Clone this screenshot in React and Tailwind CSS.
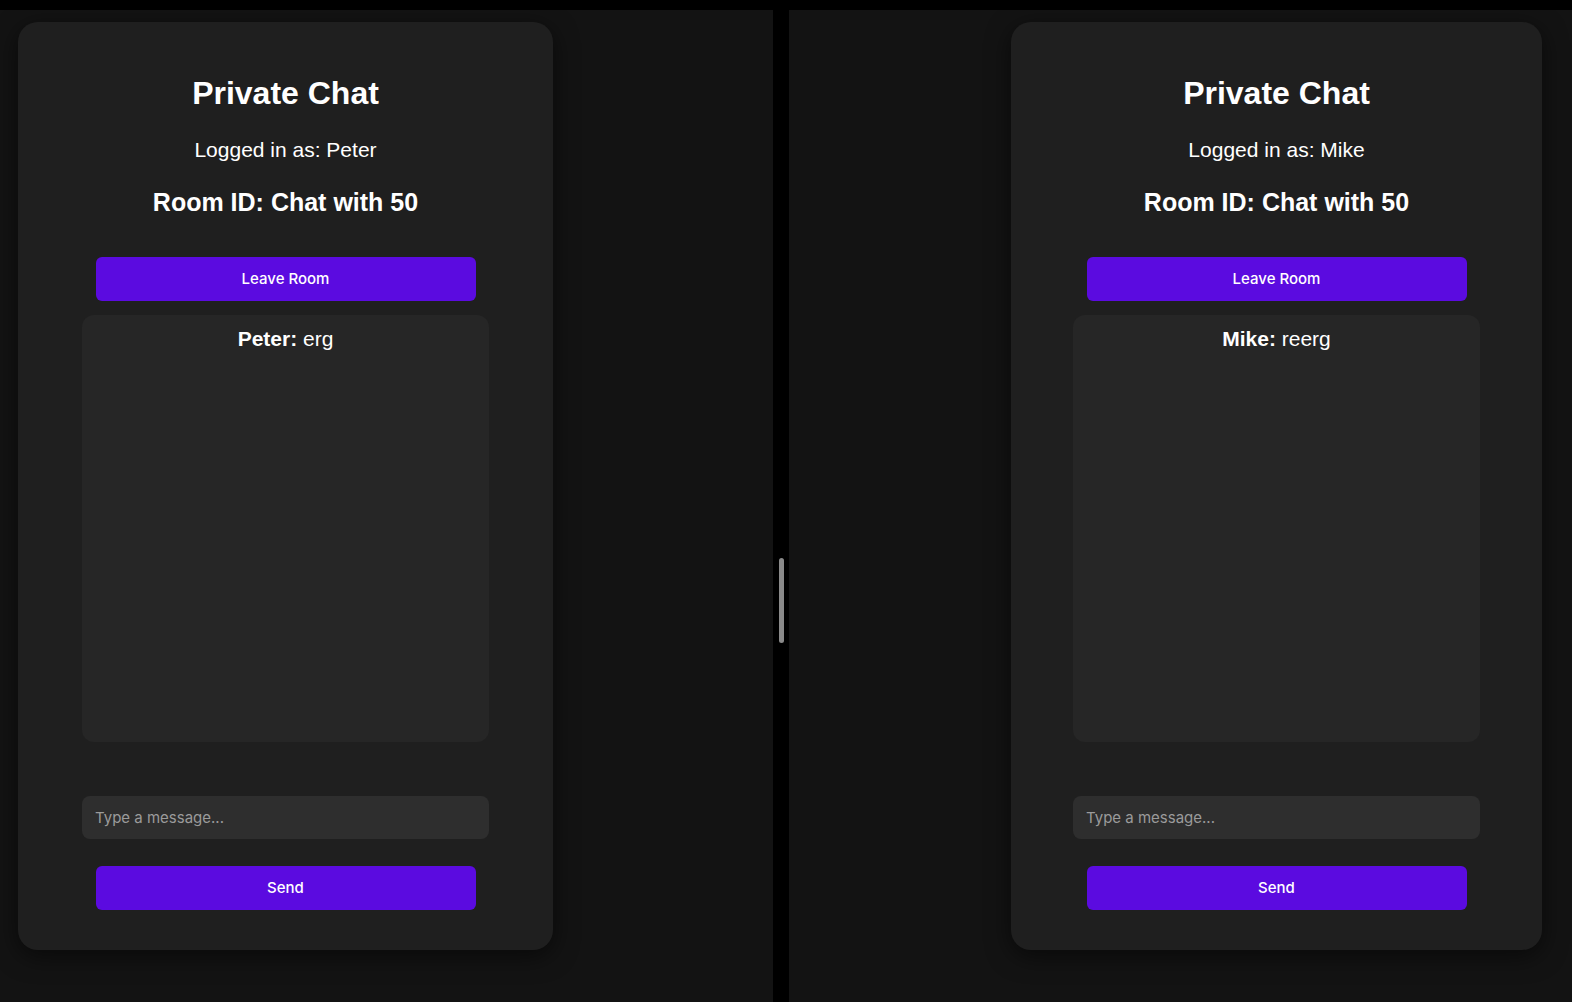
import React from 'react'

function ChatCard({ user, message, width }) {
  return (
    <div className={`${width} rounded-[20px] bg-[#1f1f1f] shadow-[0_6px_24px_rgba(0,0,0,0.55)] pt-[52px] pb-[40px] flex flex-col items-center font-['Liberation_Sans',Arial,sans-serif] text-white`}>
      <h1 className="text-[32px] leading-[38px] font-bold">Private Chat</h1>
      <p className="mt-[25px] text-[21px] leading-[26px]">Logged in as: {user}</p>
      <h3 className="mt-[24px] text-[25px] leading-[30px] font-bold">Room ID: Chat with 50</h3>

      <button className="mt-[40px] w-[380px] h-[44px] rounded-[6px] bg-[#5b0be0] text-white text-[15px] font-medium font-['Inter',sans-serif]">
        Leave Room
      </button>

      {/* message list */}
      <div className="mt-[14px] w-[407px] h-[427px] rounded-[12px] bg-[#262626] pt-[11px] flex flex-col items-center">
        <p className="text-[21px] leading-[26px]">
          <span className="font-bold">{user}:</span> {message}
        </p>
      </div>

      <input
        type="text"
        placeholder="Type a message..."
        className="mt-[54px] w-[407px] h-[43px] rounded-[8px] bg-[#2e2e2e] px-[13px] text-[15px] font-['Inter',sans-serif] text-white placeholder:text-[#9b9b9b] outline-none"
      />

      <button className="mt-[27px] w-[380px] h-[44px] rounded-[6px] bg-[#5b0be0] text-white text-[15px] font-medium font-['Inter',sans-serif]">
        Send
      </button>
    </div>
  )
}

export default function App() {
  return (
    <div className="w-[1572px] h-[1002px] bg-black pt-[10px] flex flex-col overflow-hidden">
      <div className="flex flex-1 min-h-0">
        <div className="w-[773px] bg-[#131313] pl-[18px] pt-[12px] flex items-start">
          <ChatCard user="Peter" message="erg" width="w-[535px]" />
        </div>

        {/* splitter */}
        <div className="w-[16px] bg-black flex items-start justify-center pt-[548px]">
          <div className="w-[5px] h-[85px] rounded-full bg-[#8a8a8a]" />
        </div>

        <div className="flex-1 bg-[#131313] flex items-start justify-end pr-[30px] pt-[12px]">
          <ChatCard user="Mike" message="reerg" width="w-[531px]" />
        </div>
      </div>
    </div>
  )
}
